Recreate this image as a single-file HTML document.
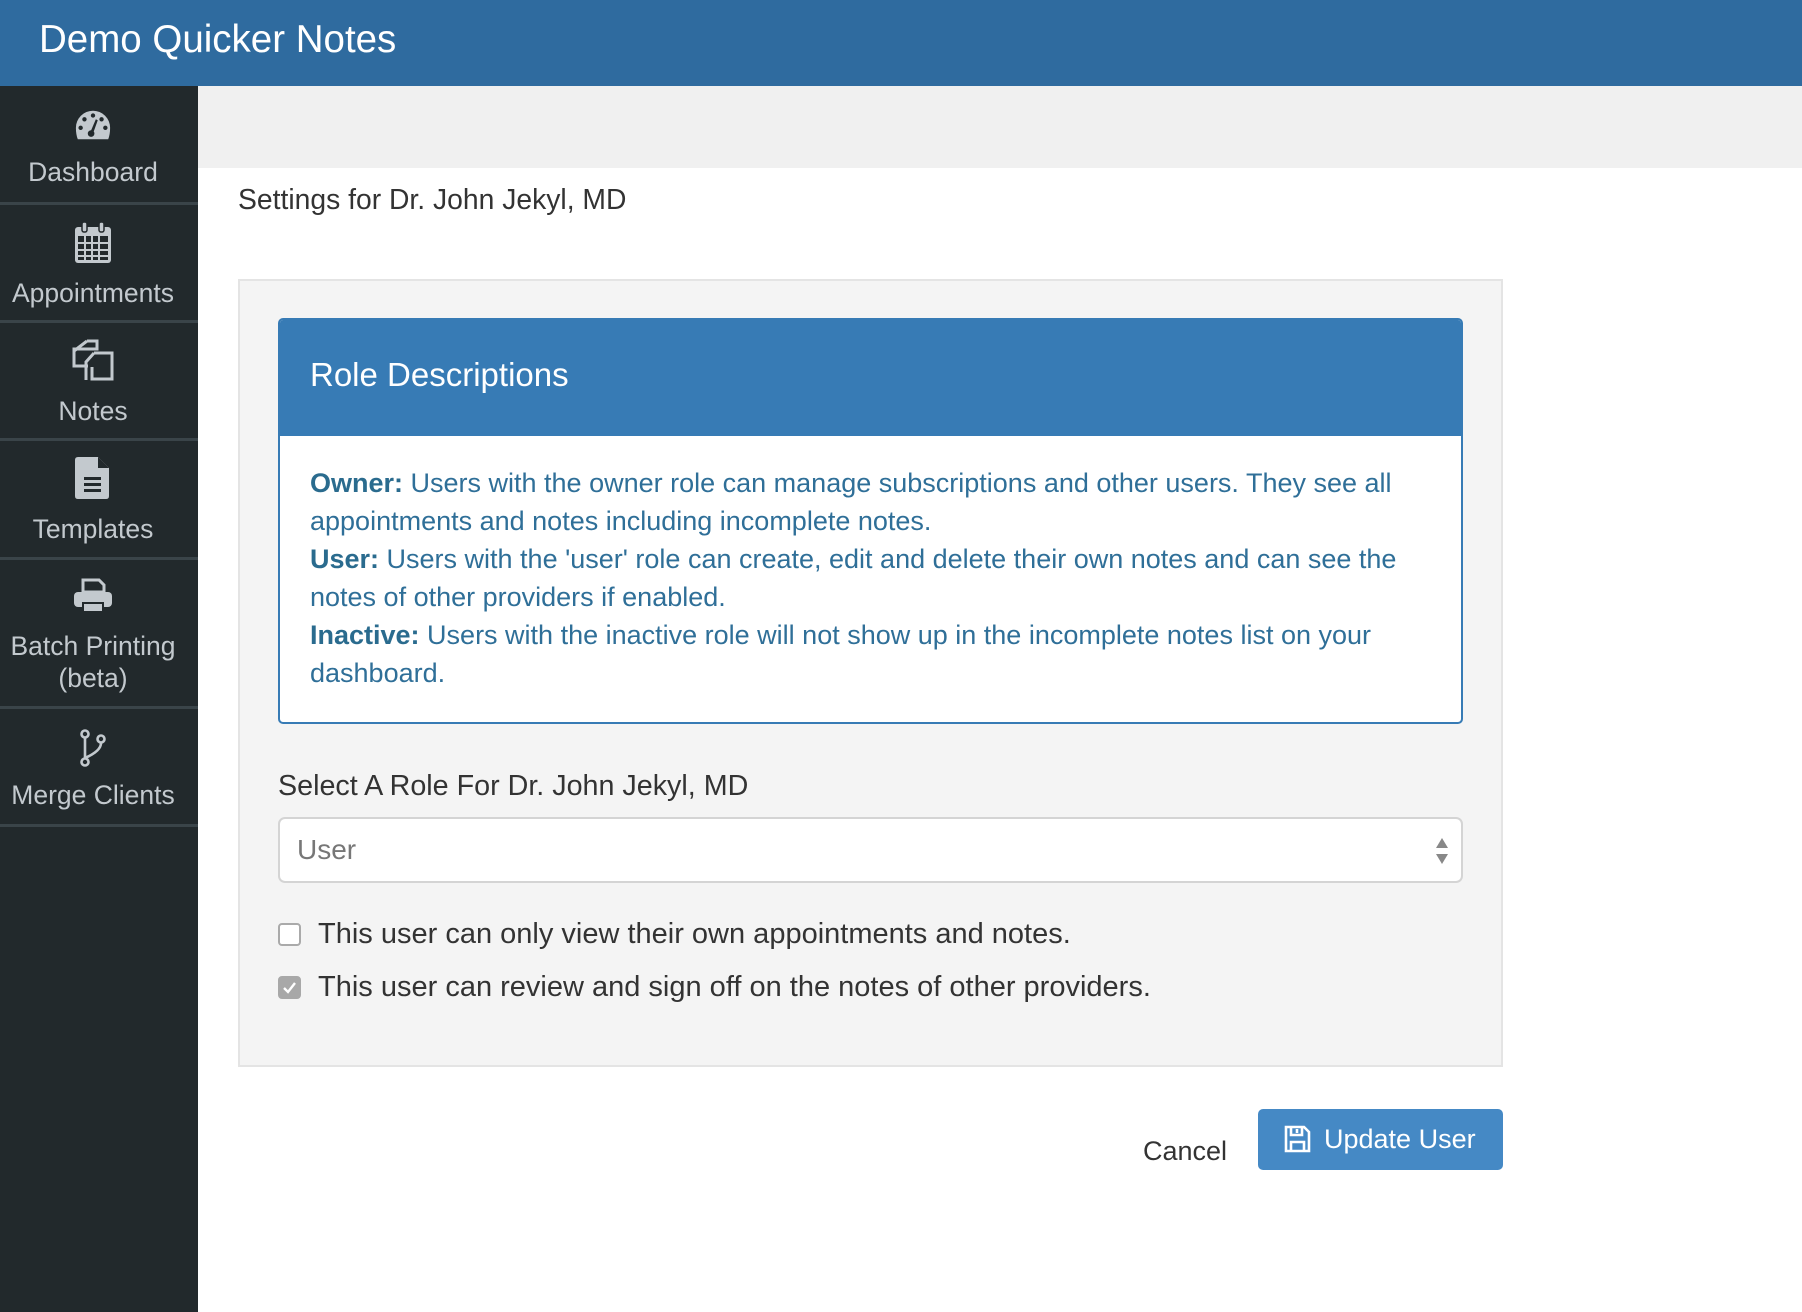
<!DOCTYPE html>
<html><head><meta charset="utf-8"><style>
*{box-sizing:border-box;margin:0;padding:0}
body{width:1802px;height:1312px;overflow:hidden;background:#fff;font-family:"Liberation Sans",sans-serif;position:relative}
.hdr{position:absolute;left:0;top:0;width:1802px;height:86px;background:#2f6b9f;color:#fff;font-size:38.5px;padding:18px 0 0 39px}
.side{position:absolute;left:0;top:86px;width:198px;height:1226px;background:#22292c}
.it{position:absolute;left:0;width:198px;border-bottom:3px solid #3a4449;color:#c3c9ce;text-align:center;font-size:26.5px;line-height:32px}
.it svg{position:absolute}
.it span{position:absolute;left:-12px;width:210px}
.band{position:absolute;left:198px;top:86px;width:1604px;height:82px;background:#f0f0f0}
.abs{position:absolute}
.panel{left:238px;top:279px;width:1265px;height:788px;background:#f4f4f4;border:2px solid #e4e4e4}
.box{left:278px;top:318px;width:1185px;height:406px;border:2px solid #377bb5;border-radius:5px;background:#fff;overflow:hidden}
.boxh{height:116px;background:#377bb5;color:#fff;font-size:33px;padding:36px 0 0 30px}
.boxb{padding:28px 30px 0 30px;color:#2f6f98;font-size:27px;line-height:38px}
.boxb b{color:#2a6b8e}
.sel{left:278px;top:817px;width:1185px;height:66px;border:2px solid #d4d4d4;border-radius:7px;background:#fff;color:#777;font-size:28px;padding:15px 0 0 17px}
.cb{width:23px;height:23px;border:2px solid #aaa;border-radius:4px;background:#fff;left:278px}
.ct{left:318px;font-size:29px;color:#333}
.btn{left:1258px;top:1109px;width:245px;height:61px;background:#4589c5;border-radius:5px;color:#fff;font-size:27px;padding:15px 0 0 66px}
</style></head><body>
<div class="hdr">Demo Quicker Notes</div>
<div class="side">
 <div class="it" style="top:0;height:119px">
  <svg style="top:22px;left:74px" width="38" height="34" viewBox="0 0 40 34"><path d="M20 2A18 18 0 0 0 2 20q0 7 2 12h32q2-5 2-12A18 18 0 0 0 20 2z" fill="#c3c9ce"/><g fill="#22292c"><circle cx="20" cy="7" r="2.3"/><circle cx="11" cy="11" r="2.3"/><circle cx="29" cy="11" r="2.3"/><circle cx="7" cy="20" r="2.3"/><circle cx="33" cy="20" r="2.3"/><circle cx="18" cy="26" r="3.5"/><path d="M17 25l6-14 2 1-5 14z"/></g></svg>
  <span style="top:70px">Dashboard</span></div>
 <div class="it" style="top:119px;height:118px">
  <svg style="top:17px;left:73px" width="40" height="42" viewBox="0 0 40 42"><rect x="2" y="5" width="36" height="36" rx="3" fill="#c3c9ce"/><g fill="#22292c"><rect x="5" y="14" width="30" height="24"/></g><g fill="#c3c9ce"><rect x="11" y="14" width="2" height="24"/><rect x="18" y="14" width="2" height="24"/><rect x="25" y="14" width="2" height="24"/><rect x="5" y="20" width="30" height="2"/><rect x="5" y="27" width="30" height="2"/><rect x="5" y="33" width="30" height="2"/></g><rect x="9" y="0" width="5" height="10" rx="2" fill="#c3c9ce" stroke="#22292c" stroke-width="1.5"/><rect x="26" y="0" width="5" height="10" rx="2" fill="#c3c9ce" stroke="#22292c" stroke-width="1.5"/></svg>
  <span style="top:72px">Appointments</span></div>
 <div class="it" style="top:237px;height:118px">
  <svg style="top:16px;left:72px" width="42" height="42" viewBox="0 0 42 42" fill="none" stroke="#c3c9ce" stroke-width="3"><path d="M15 2h10v8H2V27h14M15 2L2 12"/><path d="M22 14h18v26H20V28h0M22 14l-8 9v18"/></svg>
  <span style="top:72px">Notes</span></div>
 <div class="it" style="top:355px;height:119px">
  <svg style="top:16px;left:75px" width="36" height="42" viewBox="0 0 36 42"><path d="M3 0h20l11 11v28q0 3-3 3H3q-3 0-3-3V3q0-3 3-3z" fill="#c3c9ce"/><path d="M23 0v11h11" fill="#22292c"/><g fill="#22292c"><rect x="9" y="20" width="17" height="3"/><rect x="9" y="26" width="17" height="3"/><rect x="9" y="32" width="17" height="3"/></g></svg>
  <span style="top:72px">Templates</span></div>
 <div class="it" style="top:474px;height:149px">
  <svg style="top:18px;left:73px" width="40" height="36" viewBox="0 0 40 36"><path d="M10 2h16l5 5v7H10z" fill="none" stroke="#c3c9ce" stroke-width="3"/><rect x="1" y="14" width="38" height="15" rx="4" fill="#c3c9ce"/><rect x="9" y="24" width="22" height="11" fill="#22292c"/><rect x="11" y="26" width="18" height="7" fill="#c3c9ce"/></svg>
  <span style="top:70px">Batch Printing<br>(beta)</span></div>
 <div class="it" style="top:623px;height:118px">
  <svg style="top:20px;left:79px" width="28" height="38" viewBox="0 0 28 38" fill="none" stroke="#c3c9ce" stroke-width="2.6"><circle cx="6" cy="5" r="3.5"/><circle cx="22" cy="10" r="3.5"/><circle cx="6" cy="33" r="3.5"/><path d="M6 9v20M22 14q0 8-16 15"/></svg>
  <span style="top:70px">Merge Clients</span></div>
</div>
<div class="band"></div>
<div class="abs" style="left:238px;top:183px;font-size:28.3px;color:#333">Settings for Dr. John Jekyl, MD</div>
<div class="abs panel"></div>
<div class="abs box"><div class="boxh">Role Descriptions</div>
<div class="boxb"><b>Owner:</b> Users with the owner role can manage subscriptions and other users. They see all appointments and notes including incomplete notes.<br><b>User:</b> Users with the 'user' role can create, edit and delete their own notes and can see the notes of other providers if enabled.<br><b>Inactive:</b> Users with the inactive role will not show up in the incomplete notes list on your dashboard.</div></div>
<div class="abs" style="left:278px;top:770px;font-size:28.7px;color:#333">Select A Role For Dr. John Jekyl, MD</div>
<div class="abs sel">User<svg style="position:absolute;right:12px;top:18px" width="14" height="28" viewBox="0 0 14 28" fill="#888"><path d="M7 1l6 10H1zM7 27l6-10H1z"/></svg></div>
<div class="abs cb" style="top:923px"></div>
<div class="abs ct" style="top:918px">This user can only view their own appointments and notes.</div>
<div class="abs cb" style="top:976px;background:#a8a8a8;border-color:#a8a8a8"><svg width="19" height="19" viewBox="0 0 19 19"><path d="M4 10l4 4 7-9" stroke="#fff" stroke-width="2.4" fill="none"/></svg></div>
<div class="abs ct" style="top:971px">This user can review and sign off on the notes of other providers.</div>
<div class="abs" style="left:1143px;top:1136px;font-size:27px;color:#333">Cancel</div>
<div class="abs btn"><svg style="position:absolute;left:26px;top:16px" width="27" height="28" viewBox="0 0 27 28" fill="none" stroke="#fff" stroke-width="2.6"><path d="M2 2h18l5 5v19H2z"/><path d="M7 2v8h11V2M13 4v4M7 26v-9h13v9"/></svg>Update User</div>
</body></html>
